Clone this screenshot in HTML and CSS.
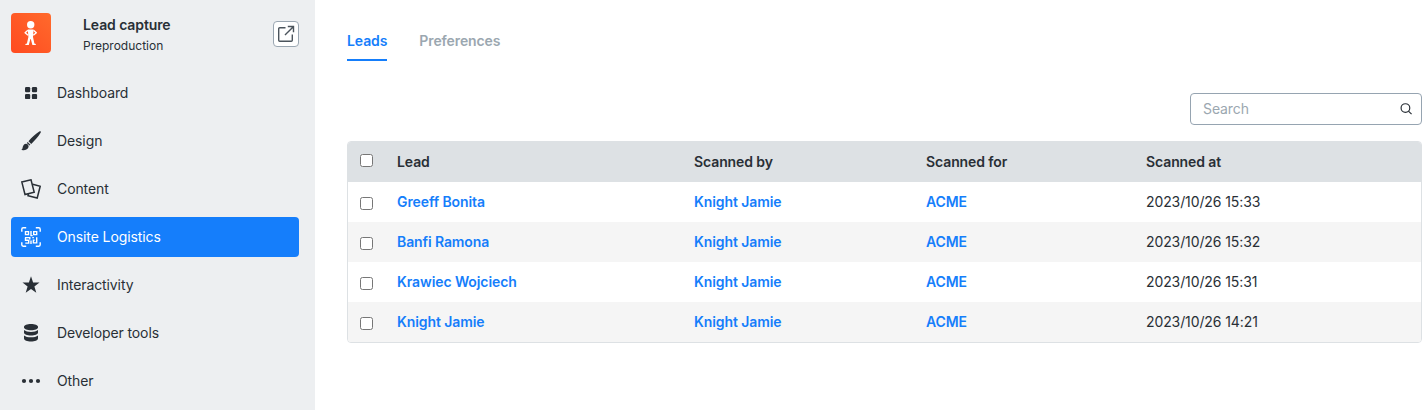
FILE: index.html
```html
<!doctype html>
<html lang="en">
<head>
  <meta charset="utf-8">
  <title>Lead capture</title>
  <link rel="stylesheet" href="styles.css">
</head>
<body>
<div class="page-container">
  <aside class="sidebar">
    <div class="app-header">
      <div class="app-logo">
        <svg width="40" height="40" viewBox="0 0 40 40" fill="#fff">
          <circle cx="19.7" cy="11.7" r="3.7"/>
          <path d="M16.8 16.5h5.800L22 24l1.400 6.400 1.400.6v1h-3.400l-1.600-5.900h-.4L17.800 32h-3.400v-1l1.500-.6L17.400 24z"/>
          <path d="M16.900 17.200l-2.800 2.500 3 2.500M22.500 17.200l2.800 2.500-3 2.500" fill="none" stroke="#fff" stroke-width="1.400" stroke-linejoin="round"/>
        </svg>
      </div>
      <div class="app-title">
        <div class="app-name">Lead capture</div>
        <div class="app-environment">Preproduction</div>
      </div>
      <a class="open-link" href="#" aria-label="Open">
        <svg width="18" height="18" viewBox="0 0 18 18" fill="none" stroke="#4b545c" stroke-width="1.4">
          <path d="M8.500 2.700H2.700c-.6 0-1 .4-1 1v11.600c0 .6.4 1 1 1h11.600c.6 0 1-.4 1-1V9.500M8 10l8.300-8.300M10.800 1.500h5.700v5.700"/>
        </svg>
      </a>
    </div>
    <nav class="nav">
      <a class="nav-item" href="#">
        <svg class="nav-icon" viewBox="0 0 20 20" fill="currentColor">
          <rect x="4" y="4" width="5.2" height="5.2" rx="1.2"/>
          <rect x="10.9" y="4" width="5.2" height="5.2" rx="1.2"/>
          <rect x="4" y="10.9" width="5.2" height="5.2" rx="1.2"/>
          <rect x="10.9" y="10.9" width="5.2" height="5.2" rx="1.2"/>
        </svg>
        <span>Dashboard</span>
      </a>
      <a class="nav-item" href="#">
        <svg class="nav-icon" viewBox="0 0 20 20" fill="currentColor">
          <path d="M19.700.4c.4.3.2.8-.1 1.300-2.400 3.900-5.700 7.800-9.400 11.200L7.500 10.200C11 6.300 14.600 3 18.300.6c.6-.3 1-.5 1.400-.2z"/>
          <path d="M6.700 11l2.700 2.700-.9.8-2.700-2.600z"/>
          <path d="M5 12.700c1.400 0 2.700 1.300 2.600 2.800-.2 2.600-3.600 4.200-7.300 3.600 1.300-.8 1.200-2 1.600-3.500.5-1.700 1.500-2.900 3.100-2.900z"/>
        </svg>
        <span>Design</span>
      </a>
      <a class="nav-item" href="#">
        <svg class="nav-icon" viewBox="0 0 20 20" fill="none" stroke="currentColor" stroke-width="1.500">
          <path d="M.8 2.900L10 .8l3.200 12.500L4 15.500zM11.700 5.300l7.500 2-3 11.700-9.200-2.300.5-1.700"/>
        </svg>
        <span>Content</span>
      </a>
      <a class="nav-item nav-item-active" href="#">
        <svg class="nav-icon" viewBox="0 0 20 20" fill="none" stroke="currentColor" stroke-width="1.400">
          <path d="M.8 4.800V2.200C.8 1.300 1.300.8 2.200.8h3M14.800.8h3c.9 0 1.400.5 1.400 1.400v2.600M19.200 15.200v2.600c0 .9-.5 1.400-1.400 1.400h-3M5.200 19.200h-3c-.9 0-1.400-.5-1.400-1.400v-2.600"/>
          <path d="M4.500 4.600h3v3h-3zM12.700 4.600h3v3h-3zM10 4v4.600h1.700M4 10.600h4.800v2M7.700 12.800v3.300H4.300M4.500 10.600v2.600h3M10 13.500V17M11.300 10.600h1.600M15.700 10.200v5.700h-3.300v-2.700h1.200"/>
        </svg>
        <span>Onsite Logistics</span>
      </a>
      <a class="nav-item" href="#">
        <svg class="nav-icon" viewBox="0 0 20 20" fill="currentColor">
          <path d="M10 1.200l2.100 6.400h6.400l-5.100 3.900 1.900 6.300-5.300-3.800-5.300 3.800 1.900-6.300-5.100-3.900h6.400z"/>
        </svg>
        <span>Interactivity</span>
      </a>
      <a class="nav-item" href="#">
        <svg class="nav-icon" viewBox="0 0 20 20" fill="currentColor">
          <path d="M3 3.800C3 2.200 6.100 1 10 1s7 1.200 7 2.800v.7c0 1.600-3.100 2.800-7 2.800S3 6.100 3 4.500z"/>
          <path d="M3 7c1.500 1.200 4.100 1.900 7 1.900s5.500-.7 7-1.900v2.800c0 1.500-3.100 2.700-7 2.700s-7-1.200-7-2.700z"/>
          <path d="M3 12.400c1.500 1.200 4.100 1.900 7 1.900s5.500-.7 7-1.900v3c0 1.600-3.100 3.100-7 3.100s-7-1.500-7-3.100z"/>
        </svg>
        <span>Developer tools</span>
      </a>
      <a class="nav-item" href="#">
        <svg class="nav-icon" viewBox="0 0 20 20" fill="currentColor">
          <circle cx="3" cy="10" r="2.1"/>
          <circle cx="10" cy="10" r="2.1"/>
          <circle cx="17" cy="10" r="2.1"/>
        </svg>
        <span>Other</span>
      </a>
    </nav>
  </aside>
  <main class="content">
    <div class="tabs">
      <a class="tab tab-active" href="#">Leads</a>
      <a class="tab" href="#">Preferences</a>
    </div>
    <div class="toolbar">
      <label class="search">
        <input class="search-input" type="text" placeholder="Search">
        <svg width="14" height="14" viewBox="0 0 14 14" fill="none" stroke="#292f36" stroke-width="1.3">
          <circle cx="6" cy="6" r="4.8"/>
          <path d="M9.300 9.300l3.500 3.400"/>
        </svg>
      </label>
    </div>
    <div class="table-container">
      <table class="leads-table">
        <thead>
          <tr>
            <th class="column-check"><input class="check" type="checkbox"></th>
            <th class="column-lead">Lead</th>
            <th class="column-by">Scanned by</th>
            <th class="column-for">Scanned for</th>
            <th>Scanned at</th>
          </tr>
        </thead>
        <tbody>
          <tr>
            <td><input class="check" type="checkbox"></td>
            <td><a href="#">Greeff Bonita</a></td>
            <td><a href="#">Knight Jamie</a></td>
            <td><a href="#">ACME</a></td>
            <td>2023/10/26 15:33</td>
          </tr>
          <tr>
            <td><input class="check" type="checkbox"></td>
            <td><a href="#">Banfi Ramona</a></td>
            <td><a href="#">Knight Jamie</a></td>
            <td><a href="#">ACME</a></td>
            <td>2023/10/26 15:32</td>
          </tr>
          <tr>
            <td><input class="check" type="checkbox"></td>
            <td><a href="#">Krawiec Wojciech</a></td>
            <td><a href="#">Knight Jamie</a></td>
            <td><a href="#">ACME</a></td>
            <td>2023/10/26 15:31</td>
          </tr>
          <tr>
            <td><input class="check" type="checkbox"></td>
            <td><a href="#">Knight Jamie</a></td>
            <td><a href="#">Knight Jamie</a></td>
            <td><a href="#">ACME</a></td>
            <td>2023/10/26 14:21</td>
          </tr>
        </tbody>
      </table>
    </div>
  </main>
</div>
</body>
</html>
```

FILE: styles.css
```css
* {
  box-sizing: border-box;
}
html,
body {
  height: 100%;
}
body {
  margin: 0;
  background: #fff;
  color: #292f36;
  font-family: Inter, sans-serif;
  font-size: 14px;
  letter-spacing: -0.1px;
  line-height: 20px;
}
a {
  color: #157efb;
  text-decoration: none;
}
.page-container {
  display: flex;
  height: 100%;
  overflow: hidden;
}
/* left navigation */
.sidebar {
  flex: none;
  width: 315px;
  padding: 13px 16px 0 11px;
  background: #edeff1;
}
.app-header {
  display: flex;
  height: 40px;
}
.app-logo {
  width: 40px;
  height: 40px;
  border-radius: 4px;
  background: linear-gradient(45deg, #ff4a20, #ff6a2c);
}
.app-title {
  flex-grow: 1;
  padding: 2px 0 0 32px;
}
.app-name {
  font-weight: 600;
}
.app-environment {
  padding-top: 1px;
  font-size: 12px;
  letter-spacing: 0;
}
.open-link {
  display: flex;
  align-items: center;
  justify-content: center;
  width: 26px;
  height: 26px;
  margin-top: 8px;
  border: 1px solid #9ba7b2;
  border-radius: 4px;
  background: #fff;
}
.nav {
  display: flex;
  flex-direction: column;
  gap: 8px;
  margin-top: 20px;
}
.nav-item {
  display: flex;
  align-items: center;
  gap: 16px;
  height: 40px;
  padding: 0 10px;
  border-radius: 4px;
  color: #292f36;
}
.nav-item-active {
  background: #157efb;
  color: #fff;
}
.nav-icon {
  width: 20px;
  height: 20px;
}
/* main area */
.content {
  flex-grow: 1;
  padding: 31px 6px 0 32px;
}
.tabs {
  display: flex;
  gap: 32px;
}
.tab {
  height: 30px;
  color: #9ba7b0;
  font-weight: 600;
}
.tab-active {
  border-bottom: 2px solid #157efb;
  color: #157efb;
}
.toolbar {
  display: flex;
  justify-content: flex-end;
  margin: 32px 0 16px;
}
.search {
  display: flex;
  align-items: center;
  width: 232px;
  height: 32px;
  padding: 0 8px 0 12px;
  border: 1px solid #96a4b1;
  border-radius: 4px;
}
.search-input {
  flex-grow: 1;
  min-width: 0;
  padding: 0;
  border: 0;
  outline: 0;
  background: none;
  font: inherit;
  letter-spacing: inherit;
}
.search-input::placeholder {
  color: #9ba7b0;
}
.table-container {
  overflow: hidden;
  border: 1px solid #dde1e4;
  border-radius: 4px;
}
.leads-table {
  width: 100%;
  border-collapse: collapse;
  table-layout: fixed;
}
.leads-table th,
.leads-table td {
  height: 40px;
  padding: 0 12px;
  text-align: left;
}
.leads-table th {
  background: #dde1e4;
  font-weight: 600;
}
.leads-table a {
  font-weight: 600;
}
.leads-table tbody tr:nth-child(even) {
  background: #f5f5f5;
}
.column-check {
  width: 37px;
}
.column-lead {
  width: 297px;
}
.column-by {
  width: 232px;
}
.column-for {
  width: 220px;
}
.check {
  display: block;
  width: 13px;
  height: 13px;
  margin: 3px 0 0;
}
th .check {
  margin: 0 0 3px;
}
```
